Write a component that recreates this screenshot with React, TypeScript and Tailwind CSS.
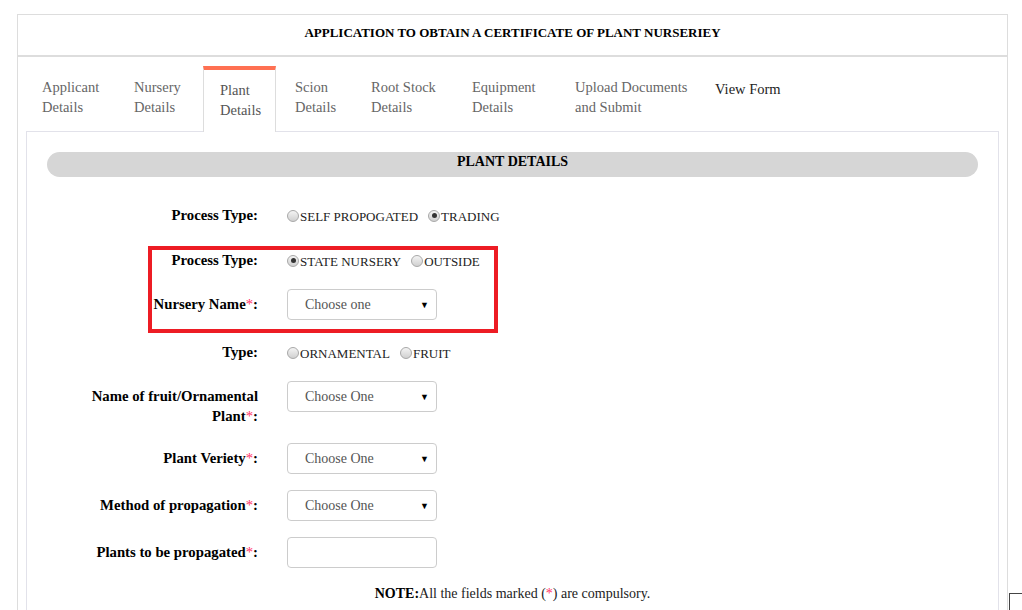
import React from 'react';

const tabs = [
  { l1: 'Applicant', l2: 'Details', w: 'w-[92px]' },
  { l1: 'Nursery', l2: 'Details', w: 'w-[86px]' },
  { l1: 'Plant', l2: 'Details', w: 'w-[73px]', active: true },
  { l1: 'Scion', l2: 'Details', w: 'w-[76px]' },
  { l1: 'Root Stock', l2: 'Details', w: 'w-[101px]' },
  { l1: 'Equipment', l2: 'Details', w: 'w-[103px]' },
  { l1: 'Upload Documents', l2: 'and Submit', w: 'w-[140px]' },
  { l1: 'View Form', l2: '', w: 'w-[110px]', dark: true },
];

const Star = () => <span className="text-[#ff3366] font-normal">*</span>;

const Radio = ({ label, checked }: { label: string; checked?: boolean }) => (
  <span className="inline-flex items-center mr-[10px]">
    <span className="w-[12px] h-[12px] rounded-full border border-[#a8a8a8] bg-gradient-to-b from-[#f4f4f4] to-[#d0d0d0] flex items-center justify-center mt-[-2px]">
      {checked && <span className="w-[5px] h-[5px] rounded-full bg-[#333]" />}
    </span>
    <span className="ml-[1px] text-[13px] text-[#222]">{label}</span>
  </span>
);

const Radios = ({ children }: { children: React.ReactNode }) => (
  <div className="h-[20px] leading-[20px] flex items-center pt-[3px]">{children}</div>
);

const Select = ({ text }: { text: string }) => (
  <div className="w-[150px] h-[31px] rounded-[4px] border border-[#ccc] bg-white flex items-center justify-between pl-[17px] pr-[7px]">
    <span className="text-[14px] leading-[20px] text-[#555]">{text}</span>
    <span className="text-[9px] leading-[10px] text-black">▼</span>
  </div>
);

const Row = ({ label, children, mt, lpt }: { label: React.ReactNode; children: React.ReactNode; mt?: string; lpt?: string }) => (
  <div className={`flex items-start ${mt ?? ''}`}>
    <div className={`w-[231px] text-right font-bold text-[14.75px] leading-[20px] text-black ${lpt ?? ''}`}>{label}</div>
    <div className="ml-[29px]">{children}</div>
  </div>
);

const App: React.FC = () => {
  return (
    <div className="relative w-[1022px] h-[610px] overflow-hidden bg-white" style={{ fontFamily: '"Liberation Serif", serif' }}>
      <div className="ml-[17px] mt-[14px] w-[991px] h-[620px] border border-[#ddd] flex flex-col">
        {/* Header */}
        <div className="h-[42px] border-b-2 border-[#ddd] flex items-center justify-center pb-[5px]">
          <h1 className="font-bold text-[13px] text-black">APPLICATION TO OBTAIN A CERTIFICATE OF PLANT NURSERIEY</h1>
        </div>

        {/* Tabs */}
        <div className="flex pl-[7px] h-[74px] text-[14.5px] leading-[20px]">
          {tabs.map((t) =>
            t.active ? (
              <div key={t.l1} className={`${t.w} mt-[9px] h-[66px] relative z-10 bg-white border-x border-[#ddd] border-t-[4px] border-t-[#ff7052] pl-[16px] pt-[10px] text-[#555] mr-[2px]`}>
                <div>{t.l1}</div>
                <div>{t.l2}</div>
              </div>
            ) : (
              <div key={t.l1} className={`${t.w} pl-[17px] pt-[20px] ${t.dark ? 'text-[#222]' : 'text-[#666]'}`}>
                <div className={t.dark ? 'mt-[2px]' : ''}>{t.l1}</div>
                {t.l2 && <div>{t.l2}</div>}
              </div>
            )
          )}
        </div>

        {/* Content */}
        <div className="ml-[8px] w-[973px] flex-1 border border-[#e2e2ea] relative">
          <div className="mx-[20px] mt-[20px] h-[25px] rounded-full bg-[#d6d6d6] flex items-center justify-center">
            <span className="font-bold text-[14px] leading-[20px] text-black mt-[-5px]">PLANT DETAILS</span>
          </div>

          <div className="relative pt-[28px]">
            <Row label="Process Type:">
              <Radios><Radio label="SELF PROPOGATED" /><Radio label="TRADING" checked /></Radios>
            </Row>
            <Row label="Process Type:" mt="mt-[25px]">
              <Radios><Radio label="STATE NURSERY" checked /><Radio label="OUTSIDE" /></Radios>
            </Row>
            <Row label={<>Nursery Name<Star />:</>} mt="mt-[19px]" lpt="pt-[5px]">
              <Select text="Choose one" />
            </Row>
            <Row label="Type:" mt="mt-[22px]">
              <Radios><Radio label="ORNAMENTAL" /><Radio label="FRUIT" /></Radios>
            </Row>
            <Row label={<>Name of fruit/Ornamental<br />Plant<Star />:</>} mt="mt-[19px]" lpt="pt-[5px]">
              <Select text="Choose One" />
            </Row>
            <Row label={<>Plant Veriety<Star />:</>} mt="mt-[17px]" lpt="pt-[5px]">
              <Select text="Choose One" />
            </Row>
            <Row label={<>Method of propagation<Star />:</>} mt="mt-[16px]" lpt="pt-[5px]">
              <Select text="Choose One" />
            </Row>
            <Row label={<>Plants to be propagated<Star />:</>} mt="mt-[16px]" lpt="pt-[5px]">
              <div className="w-[150px] h-[31px] rounded-[4px] border border-[#ccc] bg-white" />
            </Row>
            <p className="mt-[16px] text-center text-[14px] leading-[20px] text-[#222]">
              <span className="font-bold text-black">NOTE:</span>All the fields marked (<Star />) are compulsory.
            </p>

            {/* highlight annotation */}
            <div className="absolute left-[121px] top-[69px] w-[350px] h-[87px] border-[4px] border-[#ed1c24] pointer-events-none" />
          </div>
        </div>
      </div>

      {/* corner widget peeking in */}
      <div className="absolute left-[1009px] top-[593px] w-[30px] h-[30px] border-l border-t border-[#444] bg-white" />
    </div>
  );
};

export default App;
